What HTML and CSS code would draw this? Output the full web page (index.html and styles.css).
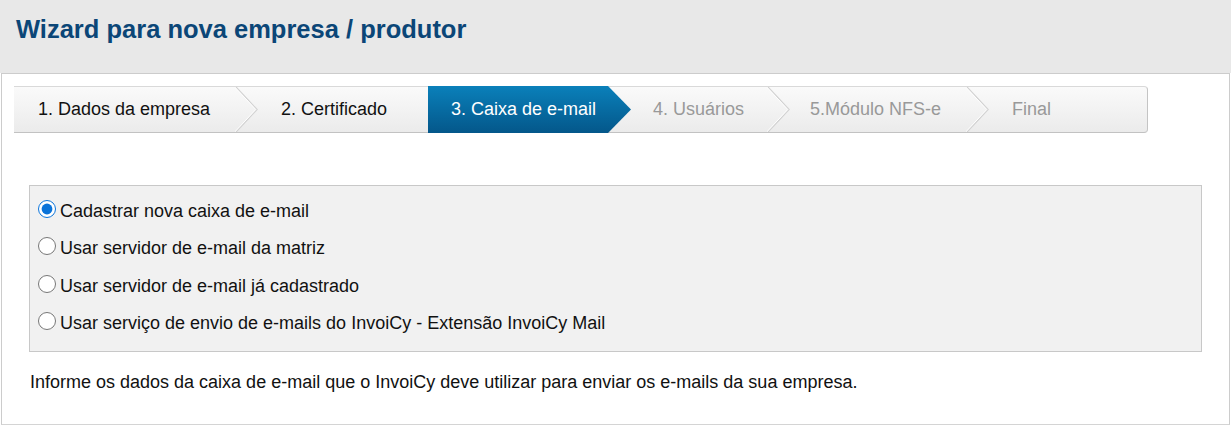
FILE: index.html
```html
<!DOCTYPE html>
<html lang="pt-BR">
<head>
    <meta charset="UTF-8">
    <meta name="viewport" content="width=device-width, initial-scale=1.0">
    <title>Wizard para nova empresa / produtor</title>
    <link rel="stylesheet" href="styles.css">
</head>
<body>
    <div class="page-header">
        <h1>Wizard para nova empresa / produtor</h1>
    </div>

    <div class="panel">
        <!-- Steps -->
        <div class="wizard-steps">
            <div class="step step-1 done">1. Dados da empresa</div>
            <svg class="sep" viewBox="0 0 23 45" preserveAspectRatio="none">
                <polyline points="0,-1 22,22.5 0,46" fill="none" stroke="#d2d2d2" stroke-width="1.4" />
                <polyline points="-1.2,-1 20.8,22.5 -1.2,46" fill="none" stroke="#ffffff" stroke-width="1" />
            </svg>
            <div class="step step-2 done">2. Certificado</div>
            <div class="step step-3 active">3. Caixa de e-mail</div>
            <svg class="tip" viewBox="0 0 23 47" preserveAspectRatio="none">
                <defs>
                    <linearGradient id="blueGrad" x1="0" y1="0" x2="0" y2="1">
                        <stop offset="0" stop-color="#0a80ba" />
                        <stop offset="1" stop-color="#04578a" />
                    </linearGradient>
                </defs>
                <polygon points="0,0 23,23.5 0,47" fill="url(#blueGrad)" />
            </svg>
            <div class="step step-4">4. Usuários</div>
            <svg class="sep" viewBox="0 0 23 45" preserveAspectRatio="none">
                <polyline points="0,-1 22,22.5 0,46" fill="none" stroke="#d2d2d2" stroke-width="1.4" />
                <polyline points="-1.2,-1 20.8,22.5 -1.2,46" fill="none" stroke="#ffffff" stroke-width="1" />
            </svg>
            <div class="step step-5">5.Módulo NFS-e</div>
            <svg class="sep" viewBox="0 0 23 45" preserveAspectRatio="none">
                <polyline points="0,-1 22,22.5 0,46" fill="none" stroke="#d2d2d2" stroke-width="1.4" />
                <polyline points="-1.2,-1 20.8,22.5 -1.2,46" fill="none" stroke="#ffffff" stroke-width="1" />
            </svg>
            <div class="step step-6">Final</div>
        </div>

        <!-- Mail box options -->
        <div class="options">
            <label class="option"><input type="radio" name="mailbox" checked> Cadastrar nova caixa de e-mail</label>
            <label class="option"><input type="radio" name="mailbox"> Usar servidor de e-mail da matriz</label>
            <label class="option"><input type="radio" name="mailbox"> Usar servidor de e-mail já cadastrado</label>
            <label class="option"><input type="radio" name="mailbox"> Usar serviço de envio de e-mails do InvoiCy - Extensão InvoiCy Mail</label>
        </div>

        <p class="hint">Informe os dados da caixa de e-mail que o InvoiCy deve utilizar para enviar os e-mails da sua empresa.</p>
    </div>
</body>
</html>
```

FILE: styles.css
```css
body {
    margin: 0;
    font-family: "Liberation Sans", Arial, sans-serif;
    font-size: 18px;
    color: #111;
    background-color: #ffffff;
}
.page-header {
    height: 73px;
    background-color: #e8e8e8;
    padding: 15px 0 0 16px;
    box-sizing: border-box;
}
.page-header h1 {
    margin: 0;
    font-size: 25.5px;
    line-height: 28px;
    font-weight: bold;
    color: #0b4677;
}
.panel {
    margin-left: 1px;
    width: 1229px;
    height: 352px;
    box-sizing: border-box;
    border: 1px solid #cccccc;
    border-bottom-color: #d4d4d4;
    padding: 12px 0 0 12px;
}
.wizard-steps {
    display: flex;
    width: 1134px;
    height: 47px;
    box-sizing: border-box;
    border-top: 1px solid #d9d9d9;
    border-bottom: 1px solid #c2c2c2;
    border-right: 1px solid #c4c4c4;
    border-radius: 0 4px 4px 0;
    background: linear-gradient(to bottom, #fafafa, #ebebeb);
}
.step {
    display: flex;
    align-items: center;
    flex: none;
    box-sizing: border-box;
    padding-left: 23px;
    white-space: nowrap;
    color: #999999;
}
.step.done {
    color: #111111;
}
.step-1 { width: 221px; padding-left: 24px; }
.step-2 { width: 170px; }
.step-3 { width: 180px; }
.step-4 { width: 136px; padding-left: 22px; }
.step-5 { width: 176px; padding-left: 20px; }
.step-6 { flex: 1; }
.step.active {
    margin: -1px 0;
    color: #ffffff;
    background: linear-gradient(to bottom, #0a80ba, #04578a);
}
.sep {
    flex: none;
    width: 23px;
    height: 45px;
}
.tip {
    flex: none;
    width: 23px;
    height: 47px;
    margin: -1px 0;
}
.options {
    margin: 52px 0 0 15px;
    width: 1173px;
    box-sizing: border-box;
    border: 1px solid #c8c8c8;
    background-color: #f1f1f1;
    padding: 6px 0 9px 8px;
}
.option {
    display: flex;
    align-items: center;
    height: 37.5px;
    line-height: 20px;
    color: #111;
}
.option input {
    width: 18px;
    height: 18px;
    margin: 0 4px 4px 0;
    accent-color: #0a73d9;
}
.hint {
    margin: 20px 0 0 16px;
    line-height: 20px;
}
```
